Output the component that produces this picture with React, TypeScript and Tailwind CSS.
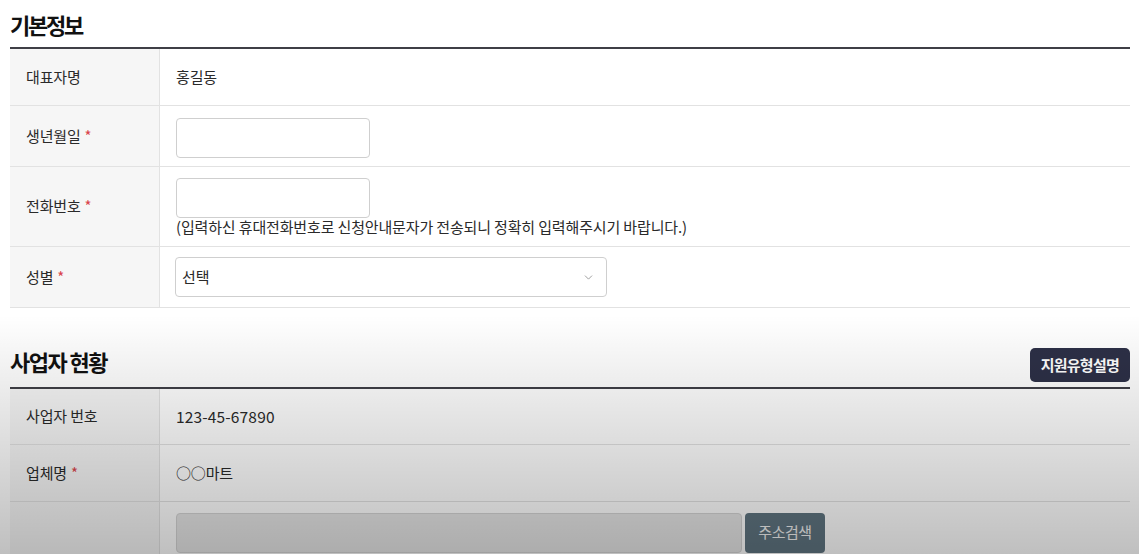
import { ChevronDown } from 'lucide-react'

const font = { fontFamily: '"Noto Sans CJK KR", "Noto Sans", sans-serif' }

function Req() {
  return <span className="ml-1 text-[#d9434b]">*</span>
}

interface RowProps {
  label: React.ReactNode
  children?: React.ReactNode
  h: string
}

function Row({ label, children, h }: RowProps) {
  return (
    <div className={`flex border-b border-[#e2e2e2] ${h}`}>
      <div className="flex w-[150px] shrink-0 items-center border-r border-[#e2e2e2] bg-[#f6f6f6] pl-4 text-[15px] tracking-[-0.01em] text-[#2a2a2a]">
        {label}
      </div>
      <div className="flex flex-1 flex-col justify-center px-4 text-[15px] tracking-[-0.01em] text-[#2a2a2a]">
        {children}
      </div>
    </div>
  )
}

export default function App() {
  return (
    <div className="relative h-[554px] w-[1139px] overflow-hidden bg-white" style={font}>
      <div className="pl-[10px] pr-[9px]">
        <h2 className="pt-[9px] pb-[7px] text-[22px] font-bold leading-[31px] tracking-[-0.1em] text-[#111]">
          기본정보
        </h2>
        <div className="border-t-2 border-[#3f3f46]">
          <Row label="대표자명" h="h-[57px]">
            홍길동
          </Row>
          <Row label={<>생년월일<Req /></>} h="h-[61px]">
            <input className="mt-[3px] h-[40px] w-[194px] rounded border border-[#cfcfcf] bg-white" />
          </Row>
          <Row label={<>전화번호<Req /></>} h="h-[80px]">
            <input className="mt-[1px] h-[40px] w-[194px] rounded border border-[#cfcfcf] bg-white" />
            <p className="-mt-[1px] leading-5 tracking-[-0.01em]">
              (입력하신 휴대전화번호로 신청안내문자가 전송되니 정확히 입력해주시기 바랍니다.)
            </p>
          </Row>
          <Row label={<>성별<Req /></>} h="h-[61px]">
            <div className="-ml-[1px] flex h-[40px] w-[432px] items-center justify-between rounded border border-[#cfcfcf] bg-white pl-[6px] pr-[11px]">
              <span>선택</span>
              <ChevronDown className="h-[13px] w-[13px] text-[#8a8a8a]" strokeWidth={1.5} />
            </div>
          </Row>
        </div>

        <div className="mt-[38px] flex items-end justify-between pb-[5px]">
          <h2 className="mb-[5px] text-[22px] font-bold leading-[31px] tracking-[-0.07em] text-[#111]">
            사업자 현황
          </h2>
          <button className="h-[34px] rounded-[5px] bg-[#2d3047] px-[11px] text-[15px] font-bold tracking-[-0.05em] text-white">
            지원유형설명
          </button>
        </div>
        <div className="border-t-2 border-[#3f3f46]">
          <Row label="사업자 번호" h="h-[56px]">
            <span className="text-[15.5px] tracking-[0.01em]">123-45-67890</span>
          </Row>
          <Row label={<>업체명<Req /></>} h="h-[57px]">
            ○○마트
          </Row>
          <Row label="" h="h-[70px]">
            <div className="-mt-[8px] flex gap-[3px]">
              <div className="h-[40px] w-[566px] rounded border border-[#d4d4d4] bg-[#e6e6e6]" />
              <button className="h-[40px] w-[80px] rounded bg-[#5f7480] text-[15px] tracking-[-0.03em] text-[#f2f2f2]">
                주소검색
              </button>
            </div>
          </Row>
        </div>
      </div>
      <div className="pointer-events-none absolute inset-x-0 top-[315px] bottom-0 bg-gradient-to-b from-transparent to-black/25" />
    </div>
  )
}
